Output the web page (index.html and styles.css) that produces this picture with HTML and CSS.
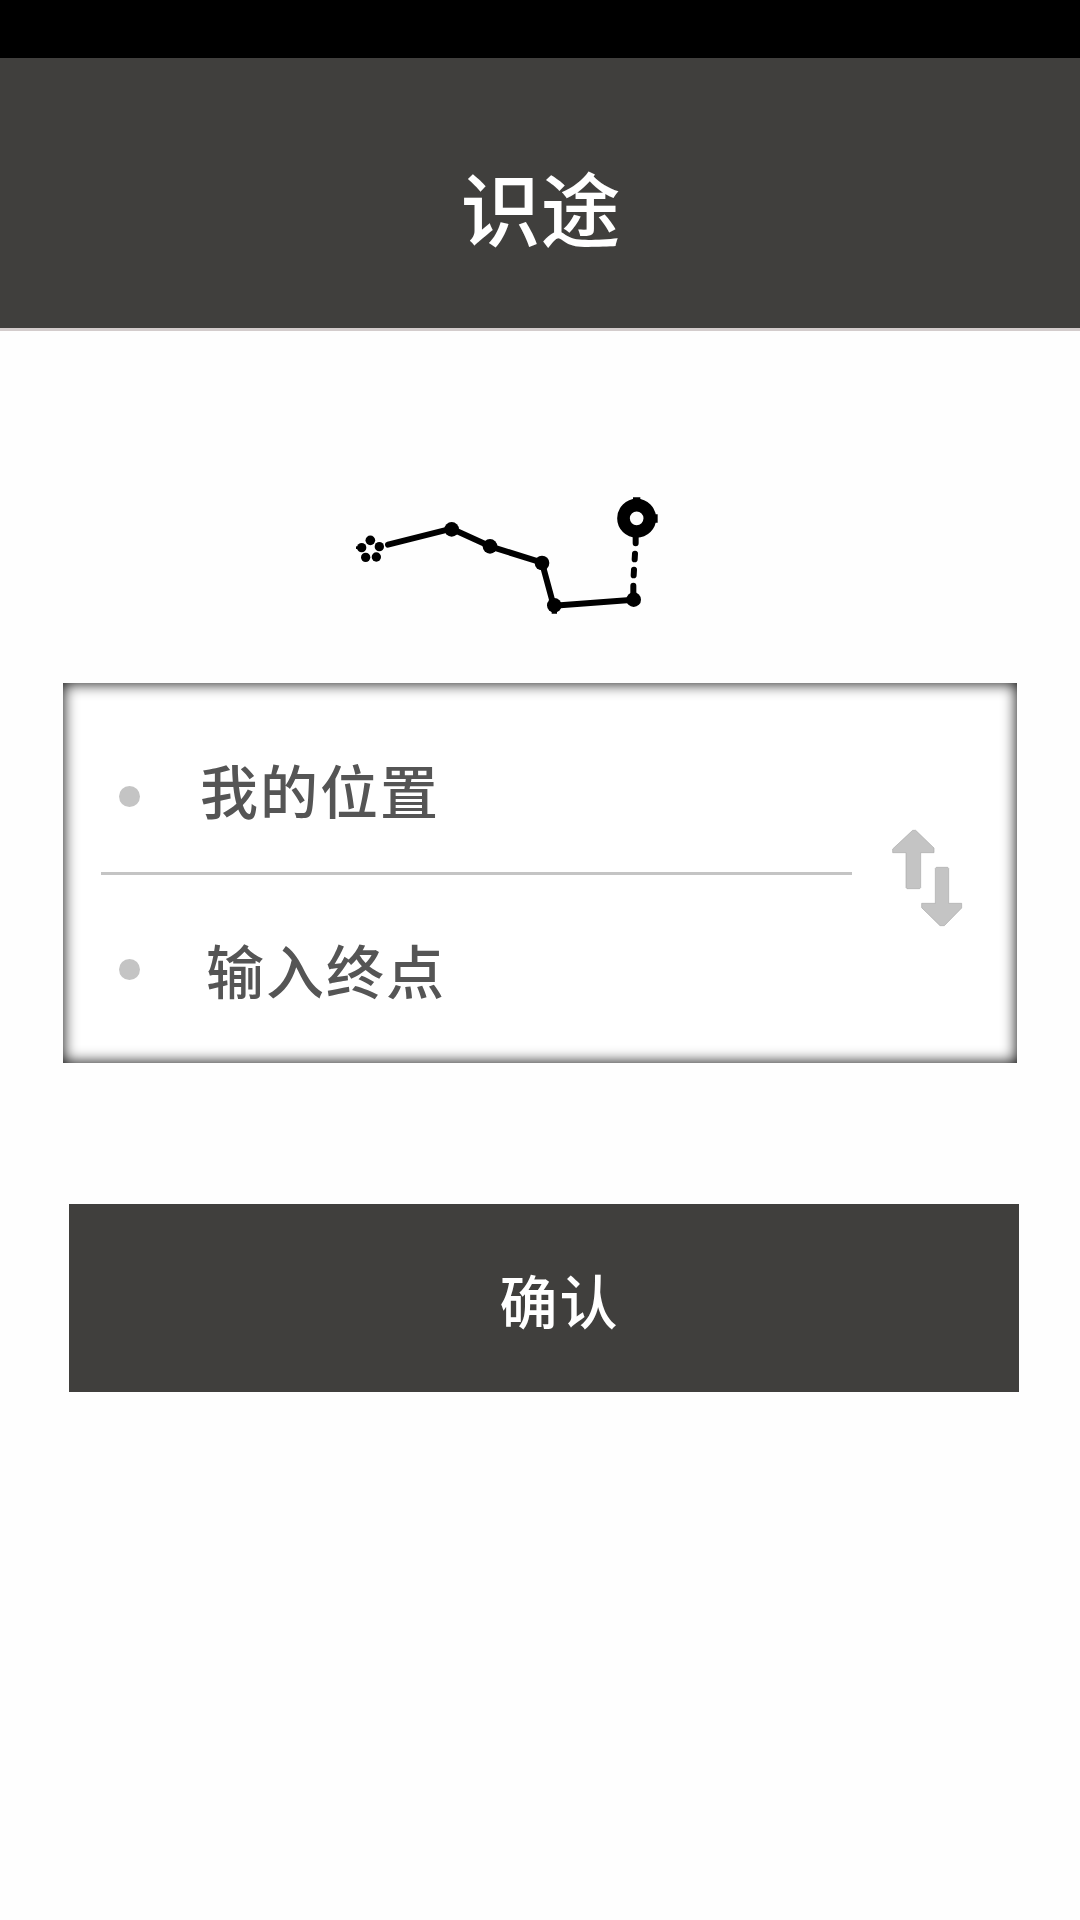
FILE: index.html
```html
<!DOCTYPE html>
<html lang="zh-CN">
<head>
<meta charset="utf-8">
<title>识途</title>
<link rel="stylesheet" href="styles.css">
</head>
<body>
<div class="status-bar"></div>
<header class="header"><h1 class="title">识途</h1></header>
<main class="main">
  <svg class="logo" viewBox="0 0 1020 450" aria-hidden="true">
    <g fill="none" stroke="#000" stroke-width="18" stroke-linecap="round" stroke-linejoin="round">
      <path d="M144 194 335 146 450 199 606 248 641 377 881 359"/>
      <path d="M887 172V190M885 221 884 238M882 269 881 286M880 317V352"/>
    </g>
    <circle cx="335" cy="148" r="22"/>
    <circle cx="450" cy="199" r="22"/>
    <circle cx="606" cy="249" r="22"/>
    <circle cx="643" cy="376" r="22"/>
    <circle cx="881" cy="359" r="22"/>
    <circle cx="890" cy="115" r="39.500" fill="none" stroke="#000" stroke-width="38"/>
    <path d="M879 52H901V60H879ZM943 103H953V128H943ZM635 390H651V401H635Z"/>
    <circle cx="91" cy="181" r="14.500"/>
    <circle cx="65" cy="203" r="14"/>
    <circle cx="118" cy="200" r="14"/>
    <circle cx="77" cy="232" r="14"/>
    <circle cx="109" cy="231" r="14"/>
    <path d="M48 199H56V207H48Z"/>
  </svg>
  <section class="card">
    <div class="fields">
      <div class="field field-start"><span class="dot"></span><span class="label">我的位置</span></div>
      <div class="field field-end"><span class="dot"></span><span class="label">输入终点</span></div>
    </div>
    <svg class="swap" viewBox="0 0 216 294" aria-hidden="true">
      <g fill="#c4c4c4" stroke="#aaa" stroke-width="2">
        <path d="M62 4H71L126 57V71H86V176L83 179H45L42 176V71H2V60Z"/>
        <path d="M133 115H167L170 118V223H209V237L157 290H144L89 236V223H130V118Z"/>
      </g>
    </svg>
  </section>
  <button class="confirm" type="button">确认</button>
</main>
</body>
</html>
```
FILE: styles.css
```css
* { box-sizing: border-box; }
body {
  margin: 0;
  min-height: 1920px;
  background: #fefefe;
  font-family: "Noto Sans CJK SC", sans-serif;
}
.status-bar { height: 58px; background: #000; }
.header {
  height: 273px;
  display: flex;
  align-items: center;
  justify-content: center;
  background: #403f3d;
  border-bottom: 3px solid #d3cccc;
  padding: 23px 0 0 1px;
}
.title {
  margin: 0;
  font-size: 80px;
  line-height: 1;
  font-weight: 500;
  color: #fff;
}
.main { display: flex; flex-direction: column; align-items: flex-start; }
.logo { width: 340px; height: 150px; margin: 149px 0 53px 340px; }
.card {
  width: 954px;
  height: 380px;
  margin-left: 63px;
  padding-left: 38px;
  display: flex;
  align-items: center;
  background: #fff;
  box-shadow: inset 0 0 15px #000;
}
.fields { width: 751px; height: 100%; }
.field { display: flex; align-items: center; padding-left: 18px; }
.field-start { height: 192px; border-bottom: 3px solid #c4c4c4; padding-top: 38px; }
.field-end { height: 188px; }
.dot { width: 21px; height: 21px; border-radius: 50%; background: #c4c4c4; }
.label {
  margin-left: 60px;
  padding-bottom: 15px;
  font-size: 58px;
  line-height: 1;
  letter-spacing: 2px;
  font-weight: 500;
  color: #555;
}
.field-end .label { margin-left: 66px; padding-bottom: 1px; }
.swap { width: 72px; height: 98px; margin: 10px 0 0 40px; }
.confirm {
  width: 950px;
  height: 188px;
  margin: 141px 0 0 69px;
  padding: 2px 0 0 31px;
  border: 0;
  background: #403f3d;
  color: #fff;
  font: 500 58px/1 "Noto Sans CJK SC", sans-serif;
  letter-spacing: 2px;
}
```
